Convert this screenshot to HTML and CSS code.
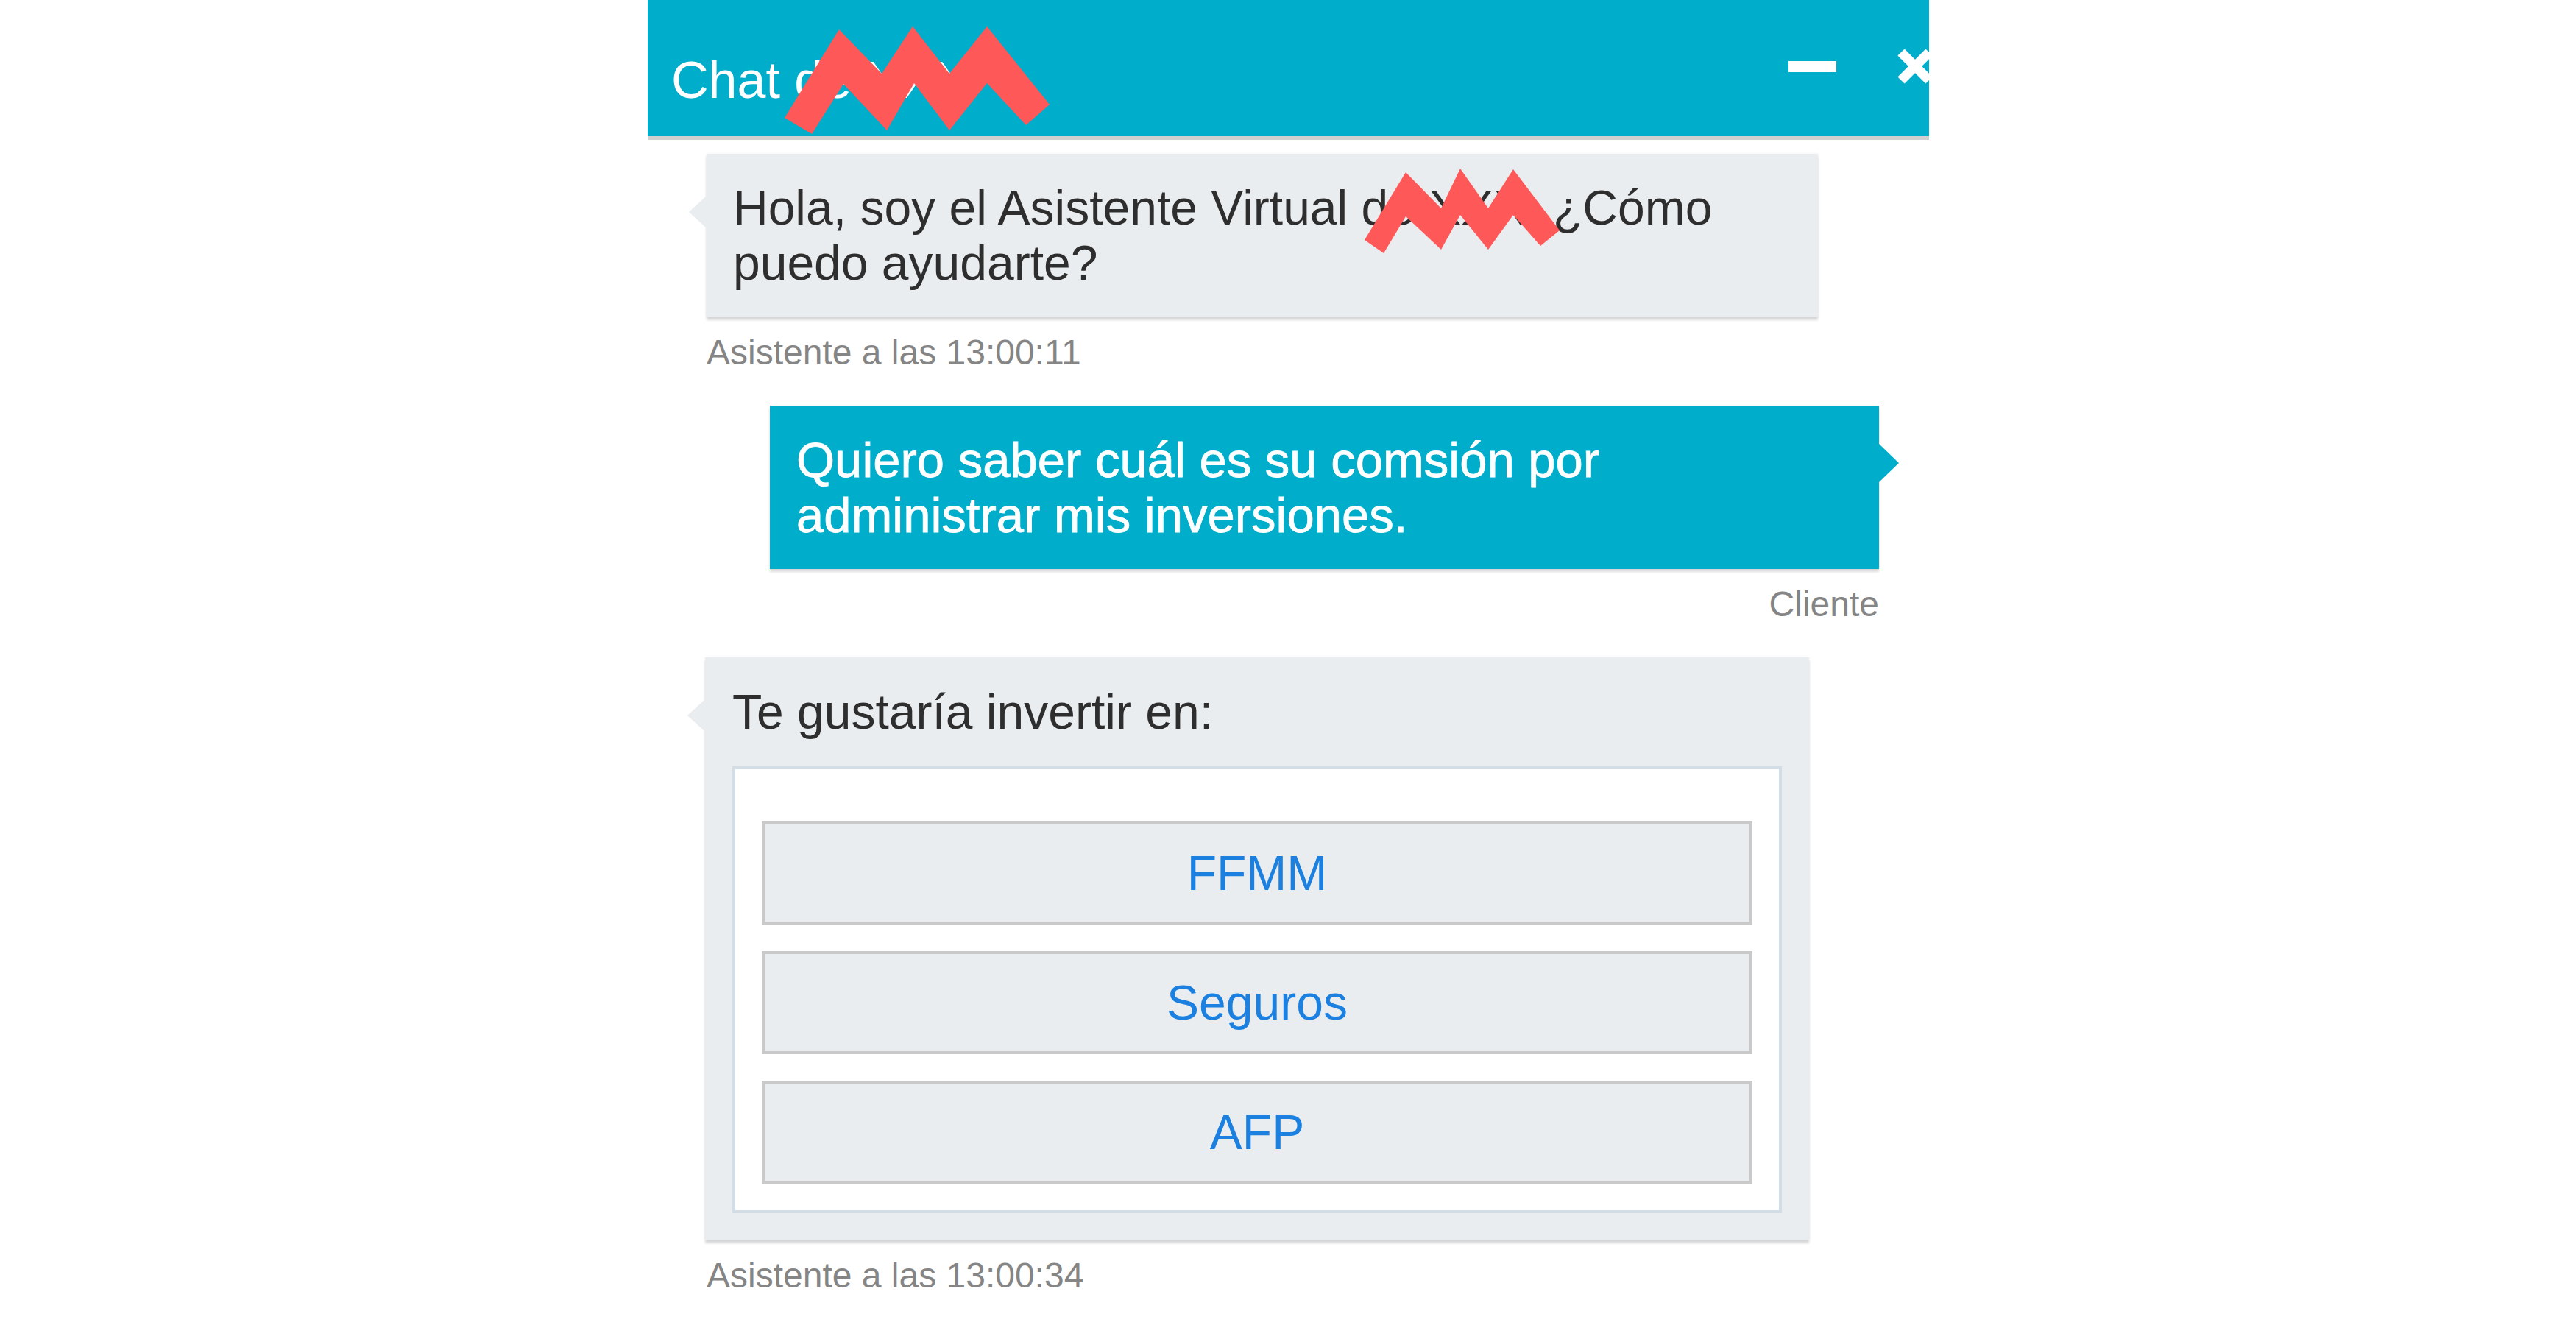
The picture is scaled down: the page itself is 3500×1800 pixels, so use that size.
FILE: index.html
```html
<!DOCTYPE html>
<html lang="es">
<head>
<meta charset="utf-8">
<title>Chat</title>
<link rel="stylesheet" href="styles.css">
</head>
<body>
<div class="chat">
  <header class="chat-header">
    <span class="chat-title">Chat de XXX</span>
    <div class="chat-controls">
      <span class="ctrl-min"></span>
      <svg class="ctrl-close" width="50" height="50" viewBox="0 0 50 50">
        <path d="M6 6 L44 44 M44 6 L6 44" stroke="#fff" stroke-width="13" fill="none"/>
      </svg>
    </div>
  </header>
  <div class="messages">
    <div class="msg msg-bot">
      <div class="bubble bubble-bot">Hola, soy el Asistente Virtual de XXX, ¿Cómo puedo ayudarte?</div>
      <div class="meta">Asistente a las 13:00:11</div>
    </div>
    <div class="msg msg-user">
      <div class="bubble bubble-user">Quiero saber cuál es su comsión por administrar mis inversiones.</div>
      <div class="meta">Cliente</div>
    </div>
    <div class="msg msg-bot">
      <div class="bubble bubble-bot bubble-options">
        <div class="options-q">Te gustaría invertir en:</div>
        <div class="options-box">
          <button class="opt">FFMM</button>
          <button class="opt">Seguros</button>
          <button class="opt">AFP</button>
        </div>
      </div>
      <div class="meta">Asistente a las 13:00:34</div>
    </div>
  </div>
</div>
<svg class="redactions" width="3500" height="1800" viewBox="0 0 3500 1800">
  <polygon fill="#ff5858" points="1066,160 1140,40 1198,100 1240,36 1290,100 1341,36 1426,142 1394,170 1341,113 1290,177 1242,113 1205,177 1146,114 1103,182"/>
  <polygon fill="#ff5858" points="1854,326 1910,234 1958,283 1984,229 2022,283 2056,230 2119,313 2093,334 2056,292 2022,339 1984,292 1958,339 1910,294 1880,344"/>
</svg>
</body>
</html>
```
FILE: styles.css
```css
html, body {
  margin: 0;
  padding: 0;
  background: #ffffff;
}

body {
  font-family: "Liberation Sans", Arial, sans-serif;
  color: #333333;
  position: relative;
}

.chat {
  margin-left: 880px;
  width: 1741px;
}

.chat-header {
  box-sizing: border-box;
  height: 190px;
  background: #00adcb;
  border-bottom: 5px solid #d0d0d0;
  display: flex;
  align-items: flex-start;
  padding-left: 32px;
  overflow: hidden;
}

.chat-title {
  margin-top: 74px;
  font-size: 70px;
  line-height: 1;
  color: #ffffff;
}

.chat-controls {
  margin-left: auto;
  margin-top: 65px;
  margin-right: -6px;
  height: 50px;
  display: flex;
  align-items: center;
  gap: 82px;
}

.ctrl-min {
  display: block;
  width: 65px;
  height: 15px;
  background: #ffffff;
}

.ctrl-close {
  display: block;
}

.messages {
  padding-top: 19px;
}

.msg {
  display: flex;
  flex-direction: column;
  margin-bottom: 45px;
}

.msg-bot {
  align-items: flex-start;
  padding-left: 80px;
}

.msg-user {
  align-items: flex-end;
  padding-right: 68px;
}

.bubble {
  position: relative;
  box-sizing: border-box;
  font-size: 66px;
  line-height: 75px;
  padding: 36px;
  box-shadow: 0 4px 3px rgba(0, 0, 0, 0.14), 0 0 4px rgba(0, 0, 0, 0.05);
}

.bubble-bot {
  width: 1510px;
  background: #eaedf0;
  color: #2e2e2e;
}

.bubble-bot::before {
  content: "";
  position: absolute;
  left: -24px;
  top: 57px;
  border-top: 22px solid transparent;
  border-bottom: 22px solid transparent;
  border-right: 24px solid #eaedf0;
}

.bubble-user {
  width: 1507px;
  background: #00adcb;
  color: #ffffff;
  font-size: 67px;
  padding-right: 48px;
  -webkit-text-stroke: 0.8px #ffffff;
}

.bubble-user::after {
  content: "";
  position: absolute;
  right: -27px;
  top: 52px;
  border-top: 26px solid transparent;
  border-bottom: 26px solid transparent;
  border-left: 27px solid #00adcb;
}

.bubble-options {
  width: 1500px;
  margin-left: -2px;
  padding: 37px;
}

.options-box {
  margin-top: 36px;
  background: #ffffff;
  border: 4px solid #d3dde6;
  padding: 71px 36px 36px;
  display: flex;
  flex-direction: column;
  gap: 36px;
}

.opt {
  height: 140px;
  box-sizing: border-box;
  border: 4px solid #c9c9c9;
  background: #eaedf0;
  color: #1b80e0;
  font-family: "Liberation Sans", Arial, sans-serif;
  font-size: 66px;
  display: flex;
  align-items: center;
  justify-content: center;
  padding: 0;
}

.meta {
  margin-top: 20px;
  font-size: 48px;
  line-height: 55px;
  color: #858585;
}

.redactions {
  position: absolute;
  left: 0;
  top: 0;
  pointer-events: none;
}
```
